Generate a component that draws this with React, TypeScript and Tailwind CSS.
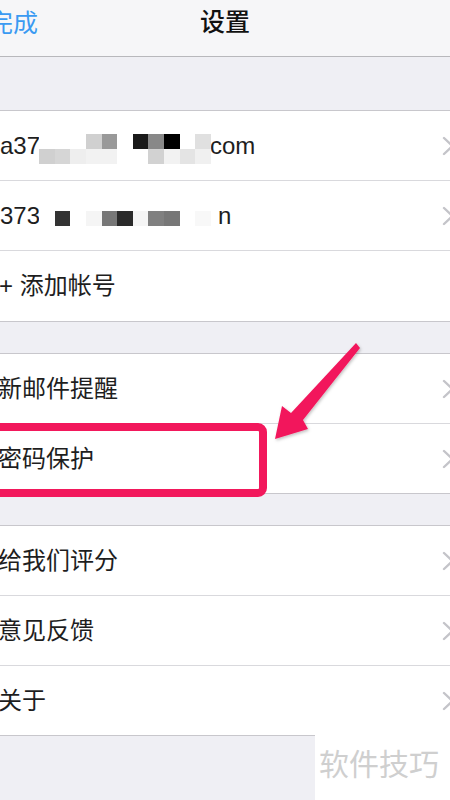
import React from "react";

const font = { fontFamily: '"Liberation Sans", "Noto Sans CJK SC", sans-serif' };

const mosaic1Top = ["", "", "", "#d0d0d0", "#999999", "", "#1a1a1a", "#888888", "#000000", "", "#e0e0e0"];
const mosaic1Bot = ["#d0d0d0", "#d6d6d6", "#eeeeee", "#f2f2f2", "#f2f2f2", "", "", "#d2d2d2", "#f2f2f2", "#e4e4e4", "#f0f0f0"];
const mosaic2 = ["", "#333333", "", "#f5f5f5", "#777777", "#2a2a2a", "#f5f5f5", "#808080", "#777777", "", "#f8f8f8"];

function Chevron() {
  return (
    <svg width="12" height="20" viewBox="0 0 12 20" className="shrink-0 mr-[-4px]">
      <polyline points="2,2 10.5,10 2,18" fill="none" stroke="#c4c4c9" strokeWidth="2.4" strokeLinecap="round" strokeLinejoin="round" />
    </svg>
  );
}

function MosaicRow({ cells }: { cells: string[] }) {
  return (
    <div className="grid grid-cols-11 w-[172px] h-[15px]">
      {cells.map((c, i) => (
        <div key={i} className="h-[15px]" style={{ backgroundColor: c || "#ffffff" }} />
      ))}
    </div>
  );
}

function Row({ children, last, tall }: { children: React.ReactNode; last?: boolean; tall?: boolean }) {
  const cls = last ? (tall ? "h-[70px]" : "h-[69px]") : "h-[70px] border-b border-[#d9d9dd]";
  return <div className={`flex items-center justify-between bg-white ${cls}`}>{children}</div>;
}

function Label({ text }: { text: string }) {
  return <span className="text-[24px] text-[#1e1e1e] ml-[-2px] leading-none">{text}</span>;
}

export default function App() {
  return (
    <div className="relative w-[450px] h-[800px] overflow-hidden bg-[#efeff4]" style={font}>
      {/* header */}
      <div className="h-[57px] bg-[#f6f6f8] border-b border-[#b8b8bc] relative flex items-center pb-[10px]">
        <span className="text-[25px] text-[#3a9af2] ml-[-12px] leading-none">完成</span>
        <span className="absolute left-0 right-0 top-[10px] text-center text-[25px] font-medium text-[#111111] leading-none">设置</span>
      </div>

      <div className="h-[53px]" />

      {/* group 1 */}
      <div className="border-y border-[#c8c7cc] bg-white">
        <Row>
          <div className="relative flex items-center">
            <span className="text-[24px] text-[#1e1e1e] leading-none w-[39px]">a37</span>
            <div className="relative z-10 bg-white w-[172px] h-[30px] mt-[6px] flex flex-col">
              <MosaicRow cells={mosaic1Top} />
              <MosaicRow cells={mosaic1Bot} />
              <div className="absolute left-0 w-[179px] top-[30px] h-[8px] bg-white" />
            </div>
            <span className="text-[24px] text-[#1e1e1e] leading-none ml-[-1px]">com</span>
          </div>
          <Chevron />
        </Row>
        <Row>
          <div className="flex items-center">
            <span className="text-[24px] text-[#1e1e1e] leading-none w-[39px]">373</span>
            <div className="relative z-10 bg-white w-[179px] h-[16px] mt-[7px]">
              <MosaicRow cells={mosaic2} />
            </div>
            <span className="text-[24px] text-[#1e1e1e] leading-none">n</span>
          </div>
          <Chevron />
        </Row>
        <Row last tall>
          <span className="text-[24px] text-[#1e1e1e] ml-[-1px] leading-none">+ 添加帐号</span>
        </Row>
      </div>

      <div className="h-[31px]" />

      {/* group 2 */}
      <div className="border-y border-[#c8c7cc] bg-white">
        <Row>
          <Label text="新邮件提醒" />
          <Chevron />
        </Row>
        <Row last>
          <Label text="密码保护" />
          <Chevron />
        </Row>
      </div>

      <div className="h-[31px]" />

      {/* group 3 */}
      <div className="border-y border-[#c8c7cc] bg-white">
        <Row>
          <Label text="给我们评分" />
          <Chevron />
        </Row>
        <Row>
          <Label text="意见反馈" />
          <Chevron />
        </Row>
        <Row last>
          <Label text="关于" />
          <Chevron />
        </Row>
      </div>

      {/* annotation */}
      <svg className="absolute left-0 top-0 pointer-events-none" width="450" height="800" viewBox="0 0 450 800">
        <defs>
          <filter id="sh" x="-20%" y="-20%" width="140%" height="140%">
            <feDropShadow dx="1" dy="1.5" stdDeviation="1.5" floodColor="#000" floodOpacity="0.25" />
          </filter>
        </defs>
        <rect x="-12" y="427" width="275" height="66" rx="5" fill="none" stroke="#f2185c" strokeWidth="8" />
        <polygon
          filter="url(#sh)"
          points="356,343 360,348 303,420 308,429 275,439 282,406 291,413"
          fill="#f2185c"
          strokeLinejoin="round"
        />
      </svg>

      {/* watermark */}
      <div className="absolute left-[315px] top-[735px] right-0 bottom-0 bg-white">
        <span className="absolute left-[4px] top-[15px] text-[30px] leading-none text-[#cfcfcf] whitespace-nowrap">软件技巧</span>
      </div>
    </div>
  );
}
